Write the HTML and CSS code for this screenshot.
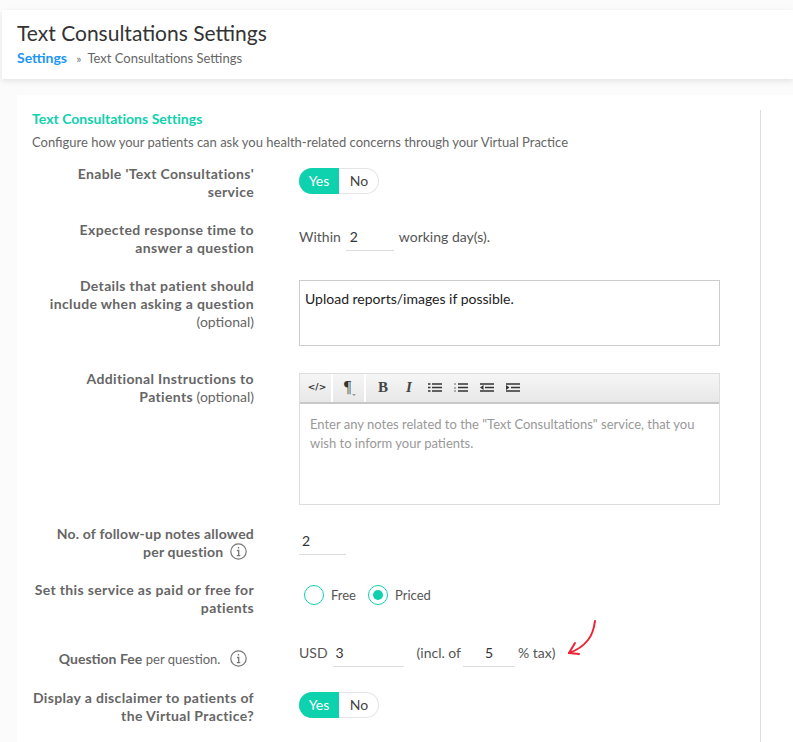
FILE: index.html
```html
<!DOCTYPE html>
<html lang="en">
<head>
  <meta charset="UTF-8" />
  <title>Text Consultations Settings</title>
  <link rel="stylesheet" href="styles.css">
</head>
<body>
  <div class="page-head">
    <h1>Text Consultations Settings</h1>
    <div class="crumbs">
      <a class="crumb-link">Settings</a>
      <span class="crumb-sep">»</span>
      <span>Text Consultations Settings</span>
    </div>
  </div>

  <div class="card">
    <div class="card-main">
      <h2>Text Consultations Settings</h2>
      <p class="intro">Configure how your patients can ask you health-related concerns through your Virtual Practice</p>

      <div class="row">
        <div class="label"><b>Enable 'Text Consultations'<br>service</b></div>
        <div class="control">
          <div class="toggle"><span class="toggle-on">Yes</span><span class="toggle-off">No</span></div>
        </div>
      </div>

      <div class="row">
        <div class="label"><b>Expected response time to<br>answer a question</b></div>
        <div class="control inline">
          <span>Within</span>
          <span class="field field-days">2</span>
          <span>working day(s).</span>
        </div>
      </div>

      <div class="row row-details">
        <div class="label"><b>Details that patient should<br>include when asking a question</b><br>(optional)</div>
        <div class="control">
          <div class="textbox">Upload reports/images if possible.</div>
        </div>
      </div>

      <div class="row">
        <div class="label"><b>Additional Instructions to<br>Patients</b> (optional)</div>
        <div class="control">
          <div class="editor">
            <div class="toolbar">
              <div class="tool-group tool-code"><span class="tool-code-text">&lt;/&gt;</span></div>
              <div class="tool-group tool-para"><span class="tool-para-text">¶</span><span class="caret"></span></div>
              <div class="tool-group tool-format">
                <span class="tool tool-b">B</span>
                <span class="tool tool-i">I</span>
                <span class="tool"><svg width="14" height="9" viewBox="0 0 14 9"><path d="M0 1h2.500M4 1h10M0 4.500h2.500M4 4.500h10M0 8h2.500M4 8h10" stroke="#333" stroke-width="1.600"/></svg></span>
                <span class="tool"><svg width="14" height="9" viewBox="0 0 14 9"><path d="M0 1h2M0 5h2M0 8h2" stroke="#666"/><path d="M4 1h10M4 4.500h10M4 8h10" stroke="#333" stroke-width="1.600"/></svg></span>
                <span class="tool"><svg width="14" height="9" viewBox="0 0 14 9"><path d="M0 1h14M5 4.500h9M0 8h14" stroke="#333" stroke-width="1.600"/><path d="M3.500 2v5L0 4.500z" fill="#333"/></svg></span>
                <span class="tool"><svg width="14" height="9" viewBox="0 0 14 9"><path d="M0 1h14M5 4.500h9M0 8h14" stroke="#333" stroke-width="1.600"/><path d="M0 2v5l3.500-2.500z" fill="#333"/></svg></span>
              </div>
            </div>
            <div class="editor-body">Enter any notes related to the "Text Consultations" service, that you wish to inform your patients.</div>
          </div>
        </div>
      </div>

      <div class="row">
        <div class="label label-tight"><b>No. of follow-up notes allowed<br>per question</b>
          <svg class="info" width="17" height="17" viewBox="0 0 17 17"><circle cx="8.500" cy="8.500" r="7.700" fill="none" stroke="#777" stroke-width="1.200"/><path d="M8.500 4v1.600M7 7.500h1.700v5M6.800 12.700h3.500" fill="none" stroke="#777" stroke-width="1.300"/></svg>
        </div>
        <div class="control inline">
          <span class="field field-follow">2</span>
        </div>
      </div>

      <div class="row row-paid">
        <div class="label"><b>Set this service as paid or free for<br>patients</b></div>
        <div class="control radios">
          <span class="radio"></span><span class="radio-text">Free</span>
          <span class="radio radio-checked"></span><span>Priced</span>
        </div>
      </div>

      <div class="row row-fee">
        <div class="label label-fee"><b>Question Fee</b> <small>per question.</small>
          <svg class="info info-fee" width="17" height="17" viewBox="0 0 17 17"><circle cx="8.500" cy="8.500" r="7.700" fill="none" stroke="#777" stroke-width="1.200"/><path d="M8.500 4v1.600M7 7.500h1.700v5M6.800 12.700h3.500" fill="none" stroke="#777" stroke-width="1.300"/></svg>
        </div>
        <div class="control inline fee">
          <span>USD</span>
          <span class="field field-fee">3</span>
          <span class="incl">(incl. of</span>
          <span class="field field-tax">5</span>
          <span>% tax)</span>
          <svg class="arrow" width="30" height="36" viewBox="0 0 30 36"><path d="M28 1c-1 8-3 14-7 19-4 5-10 10-19 13" fill="none" stroke="#ee2233" stroke-width="2" stroke-linecap="round"/><path d="M8 23L2 33l10 1" fill="none" stroke="#ee2233" stroke-width="2" stroke-linecap="round" stroke-linejoin="round"/></svg>
        </div>
      </div>

      <div class="row">
        <div class="label"><b>Display a disclaimer to patients of<br>the Virtual Practice?</b></div>
        <div class="control">
          <div class="toggle"><span class="toggle-on">Yes</span><span class="toggle-off">No</span></div>
        </div>
      </div>
    </div>
  </div>
</body>
</html>
```

FILE: styles.css
```css
* {
  margin: 0;
  padding: 0;
  box-sizing: border-box;
}

html, body {
  height: 742px;
  overflow: hidden;
}

body {
  background: #fbfbfb;
  font-family: Lato, sans-serif;
  font-size: 14px;
  color: #555;
  padding-top: 10px;
}

.page-head {
  background: #fff;
  margin-left: 2px;
  height: 69px;
  padding: 10px 15px 0;
  box-shadow: 0 2px 6px rgba(0, 0, 0, 0.1);
}

h1 {
  font-size: 21px;
  font-weight: 400;
  line-height: 26px;
  color: #333;
}

.crumbs {
  margin-top: 2px;
  line-height: 20px;
  font-size: 13px;
  color: #666;
}

.crumb-link {
  color: #2196f3;
  font-size: 14px;
  font-weight: 700;
}

.crumb-sep {
  margin: 0 3px 0 6px;
  color: #777;
  font-size: 12px;
}

.card {
  background: #fff;
  margin: 16px 0 0 17px;
  height: 647px;
  padding: 15px 32px 0 15px;
}

.card-main {
  border-right: 1px solid #ddd;
  height: 100%;
}

h2 {
  font-size: 14px;
  font-weight: 700;
  letter-spacing: 0.03px;
  line-height: 18px;
  color: #0ed1ae;
}

.intro {
  margin-top: 5px;
  margin-bottom: 14px;
  font-size: 13px;
  line-height: 18px;
  color: #666;
}

.row {
  display: flex;
  margin-left: -15px;
  padding-bottom: 20px;
}

.label {
  width: 237px;
  flex: none;
  text-align: right;
  font-size: 14px;
  line-height: 18px;
  color: #666;
}

.label b {
  font-weight: 700;
  letter-spacing: 0.35px;
  color: #666;
}

.label-tight b {
  letter-spacing: 0.2px;
}

.label-fee b {
  letter-spacing: 0;
}

.control {
  margin-left: 45px;
  padding-top: 3px;
  color: #555;
}

.inline {
  display: flex;
  align-items: flex-start;
}

.toggle {
  display: flex;
  width: 80px;
  height: 26px;
  line-height: 26px;
  border-radius: 13px;
  overflow: hidden;
  text-align: center;
  box-shadow: inset 0 0 0 1px #e5e5e5;
}

.toggle-on {
  width: 40px;
  background: #0ed1ae;
  color: #fff;
}

.toggle-off {
  width: 40px;
  color: #444;
}

.inline > span {
  line-height: 20px;
  padding-top: 3px;
}

.field {
  display: block;
  height: 27px;
  border-bottom: 1px solid #ddd;
  color: #333;
}

.field-days {
  width: 48px;
  margin: 0 5px;
  padding-left: 4px;
}

.field-follow {
  width: 47px;
  padding-left: 3px;
}

.textbox {
  width: 421px;
  height: 66px;
  border: 1px solid #ccc;
  padding: 8px 5px;
  line-height: 20px;
  color: #222;
}

.row-details {
  padding-bottom: 24px;
}

.editor {
  width: 421px;
  border: 1px solid #ddd;
  height: 132px;
}

.toolbar {
  display: flex;
  height: 30px;
  background: linear-gradient(#f6f6f6, #e8e8e8);
  border-bottom: 2px solid #c8c8c8;
  color: #333;
}

.tool-group {
  display: flex;
  align-items: center;
  height: 100%;
  padding-bottom: 2px;
  border-right: 2px solid #fff;
}

.tool-code {
  width: 33px;
  padding-left: 3px;
  justify-content: center;
}

.tool-code-text {
  font-family: "DejaVu Sans", sans-serif;
  font-size: 9px;
  font-weight: 700;
}

.tool-para {
  width: 33px;
  padding-right: 2px;
  justify-content: center;
  position: relative;
}

.tool-para-text {
  font-family: "Liberation Serif", serif;
  font-size: 16px;
}

.caret {
  position: absolute;
  right: 8px;
  bottom: 6px;
  border: 2px solid transparent;
  border-top-color: #999;
  border-bottom: 0;
}

.tool-format {
  border-right: 0;
  padding-left: 4px;
}

.tool {
  display: flex;
  justify-content: center;
  width: 26px;
}

.tool-b, .tool-i {
  font-family: "Liberation Serif", serif;
  font-size: 15px;
  font-weight: 700;
  color: #444;
}

.tool-i {
  font-style: italic;
}

.editor-body {
  padding: 11px 10px;
  font-size: 13px;
  line-height: 19px;
  color: #999;
}

.info {
  vertical-align: -3px;
  margin: 0 7px 0 3px;
}

.row-paid {
  padding-bottom: 33px;
}

.radios {
  display: flex;
  align-items: center;
  height: 28px;
  padding: 0 0 0 5px;
  font-size: 13px;
}

.radio {
  width: 20px;
  height: 20px;
  border: 1px solid #0ed1ae;
  border-radius: 50%;
  margin-right: 7px;
  position: relative;
}

.radio-text {
  margin-right: 12px;
}

.radio-checked::after {
  content: "";
  position: absolute;
  top: 4px;
  left: 4px;
  width: 10px;
  height: 10px;
  border-radius: 50%;
  background: #0ed1ae;
}

.row-fee {
  padding-bottom: 21px;
}

small {
  font-size: 13px;
  color: #666;
}

.info-fee {
  margin-left: 6px;
}

.fee {
  margin-top: -13px;
  position: relative;
}

.field-fee {
  width: 71px;
  margin: 0 13px 0 5px;
  padding-left: 3px;
}

.incl {
  margin-right: 2px;
}

.field-tax {
  width: 52px;
  margin-right: 3px;
  text-align: center;
}

.arrow {
  position: absolute;
  left: 268px;
  top: -17px;
}
```
